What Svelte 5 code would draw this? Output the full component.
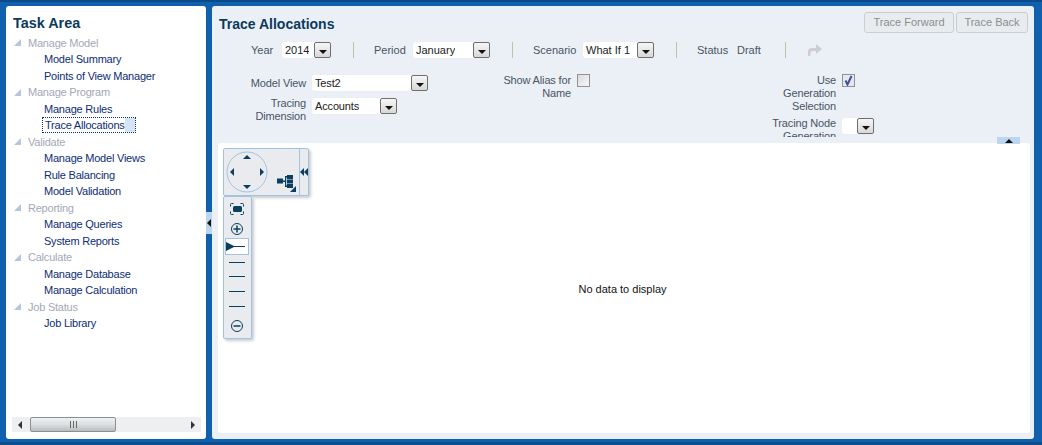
<script>
  const tasks = [
    { name: "Manage Model", items: ["Model Summary", "Points of View Manager"] },
    { name: "Manage Program", items: ["Manage Rules", "Trace Allocations"] },
    { name: "Validate", items: ["Manage Model Views", "Rule Balancing", "Model Validation"] },
    { name: "Reporting", items: ["Manage Queries", "System Reports"] },
    { name: "Calculate", items: ["Manage Database", "Manage Calculation"] },
    { name: "Job Status", items: ["Job Library"] },
  ];
  const ticks = [262, 276, 291, 306];
</script>

{#snippet combo(text, width)}
  <span class="combo" style="width:{width}px">
    <span class="combo-text">{text}</span>
    <span class="combo-btn"><i></i></span>
  </span>
{/snippet}

<div class="page">
  <aside class="left">
    <h2>Task Area</h2>
    <ul class="tree">
      {#each tasks as t}
        <li class="group"><span class="tri"></span>{t.name}</li>
        {#each t.items as item}
          <li class="item"><span class:current={item === "Trace Allocations"}>{item}</span></li>
        {/each}
      {/each}
    </ul>
    <div class="hscroll">
      <span class="arr l"></span>
      <span class="thumb"><b></b></span>
      <span class="arr r"></span>
    </div>
  </aside>

  <span class="split"><i></i></span>

  <main class="right">
    <header class="head">
      <h1>Trace Allocations</h1>
      <div class="btns">
        <button class="b1">Trace Forward</button>
        <button class="b2">Trace Back</button>
      </div>
    </header>

    <div class="bar">
      <label class="l-year">Year</label>
      {@render combo("2014", 49)}
      <span class="sep"></span>
      <label class="l-period">Period</label>
      {@render combo("January", 77)}
      <span class="sep"></span>
      <label class="l-scenario">Scenario</label>
      {@render combo("What If 1", 71)}
      <span class="sep"></span>
      <label class="l-status">Status</label>
      <span class="draft">Draft</span>
      <span class="sep"></span>
      <svg class="redo" width="16" height="14" viewBox="0 0 16 14">
        <path d="M1 13V8.500C1 6.500 2.500 5 4.500 5H9V1l6 5-6 5V8H5.500C4 8 3.500 9 3.500 11L3 13Z" fill="#cfcdcf" />
      </svg>
    </div>

    <div class="form">
      <div class="col c1">
        <div class="field"><label>Model View</label>{@render combo("Test2", 116)}</div>
        <div class="field dim"><label>Tracing Dimension</label>{@render combo("Accounts", 85)}</div>
      </div>
      <div class="col c2">
        <div class="field"><label>Show Alias for Name</label><span class="check off"></span></div>
      </div>
      <div class="col c3">
        <div class="field">
          <label>Use Generation Selection</label>
          <span class="check">
            <svg width="11" height="11" viewBox="0 0 11 11"><path d="M2.500 5.500 4.500 9.500 8.500 1" fill="none" stroke="#3f4f9c" stroke-width="2" /></svg>
          </span>
        </div>
        <div class="field node"><label>Tracing Node Generation</label>{@render combo("", 32)}</div>
      </div>
    </div>

    <span class="collapse"><i></i></span>

    <section class="canvas">
      <p>No data to display</p>

      <div class="pan">
        <svg class="pan-art" width="86" height="48" viewBox="0 0 86 48">
          <circle cx="24" cy="24" r="20" fill="#e9ebef" stroke="#a3c2e0" stroke-width="1" />
          <g fill="#0b3f5f">
            <path d="M24 7l-4 4h8Z" /><path d="M24 41l-4-4h8Z" />
            <path d="M7 24l4-4v8Z" /><path d="M41 24l-4-4v8Z" />
            <rect x="54" y="30.500" width="6" height="5" />
            <path d="M60 32.500h2V28h2v1.500h-.800v8h.800V39h-2v-5h-2Z" />
            <rect x="64" y="27" width="6" height="4" /><rect x="64" y="31.500" width="6" height="4" /><rect x="64" y="36" width="6" height="4" />
            <path d="M73 44h-6l6-6Z" />
            <path d="M77 24l4-4v8Z" /><path d="M81 24l4-4v8Z" />
          </g>
          <line x1="76.500" y1="0" x2="76.500" y2="48" stroke="#a3c2e0" />
        </svg>
      </div>

      <div class="zoom">
        <svg width="29" height="143" viewBox="223 196 29 143">
          <path d="M230.500 206.500v-2a1 1 0 0 1 1-1h2M240.500 203.500h2a1 1 0 0 1 1 1v2M243.500 211.500v2a1 1 0 0 1-1 1h-2M233.500 214.500h-2a1 1 0 0 1-1-1v-2" fill="none" stroke="#0b3f5f" />
          <rect x="233" y="206" width="9" height="6" rx="1.500" fill="#0b3f5f" />
          <circle cx="237" cy="229" r="5.500" fill="#e9ebef" stroke="#0b3f5f" />
          <path d="M233.500 229h7M237 225.500v7" stroke="#0b3f5f" stroke-width="1.500" />
          <rect x="225.500" y="238.500" width="23" height="16" fill="#fff" stroke="#a3c2e0" />
          <path d="M226 242l9 4.500-9 4.500Z" fill="#0b3f5f" />
          <line x1="232" y1="246.500" x2="245" y2="246.500" stroke="#0b3f5f" />
          {#each ticks as y}
            <line x1="229" y1={y + 0.5} x2="245" y2={y + 0.5} stroke="#0b3f5f" />
          {/each}
          <circle cx="237" cy="326" r="5.500" fill="#e9ebef" stroke="#0b3f5f" />
          <path d="M233.500 326h7" stroke="#0b3f5f" stroke-width="1.500" />
        </svg>
      </div>
    </section>
  </main>
</div>

<style>
  :global(body) {
    margin: 0;
    background: #1160ae;
  }
  .page {
    box-sizing: border-box;
    width: 1042px;
    height: 445px;
    display: flex;
    padding: 4px 8px 3px 6px;
    background: #1160ae;
    border-top: 2px solid #0b4a88;
    border-bottom: 3px solid #0c4f90;
    font: 11px/13px "Liberation Sans", Arial, sans-serif;
    color: #4a5463;
    overflow: hidden;
  }
  .left {
    box-sizing: border-box;
    width: 200px;
    height: 433px;
    background: #fff;
    border-radius: 3px;
    position: relative;
    padding: 8px 0 0 7px;
  }
  h2 {
    margin: 0 0 2.500px;
    font-size: 14.400px;
    line-height: 18px;
    font-weight: 700;
    color: #0b3a5c;
  }
  .tree {
    list-style: none;
    margin: 0;
    padding: 0;
    letter-spacing: -0.220px;
  }
  .tree li {
    height: 16.500px;
    line-height: 16.500px;
    white-space: nowrap;
  }
  .group {
    color: #a3a8b8;
    display: flex;
    align-items: center;
  }
  .tri {
    width: 0;
    height: 0;
    margin: 0 7px 0 1px;
    border-left: 7px solid transparent;
    border-bottom: 7px solid #b5c6da;
  }
  .item {
    padding-left: 31px;
    color: #0c2d78;
  }
  .current {
    display: inline-block;
    line-height: 14px;
    padding: 0 10px 0 2px;
    margin-left: -1px;
    outline: 1px dotted #0c2d78;
    background: linear-gradient(to right, transparent 89%, #d5e4f3 89%);
  }
  .hscroll {
    position: absolute;
    left: 6px;
    right: 5px;
    bottom: 7px;
    height: 15px;
    display: flex;
    align-items: center;
    background: #eeeff1;
  }
  .arr {
    width: 0;
    height: 0;
    border-top: 4px solid transparent;
    border-bottom: 4px solid transparent;
  }
  .arr.l {
    margin-left: 6px;
    border-right: 4px solid #333;
  }
  .arr.r {
    margin-left: auto;
    margin-right: 6px;
    border-left: 4px solid #333;
  }
  .thumb {
    box-sizing: border-box;
    width: 86px;
    height: 15px;
    margin-left: 8px;
    display: flex;
    align-items: center;
    justify-content: center;
    border: 1px solid #8c8f92;
    border-radius: 2px;
    background: linear-gradient(#eef0f1, #dcdfe0 50%, #b9bdbf);
  }
  .thumb b {
    width: 7px;
    height: 7px;
    background: repeating-linear-gradient(to right, #666 0 1px, transparent 1px 3px);
  }
  .split {
    width: 6px;
    height: 22px;
    margin-top: 206px;
    background: #bcd6f0;
    display: flex;
    align-items: center;
    flex: none;
  }
  .split i {
    width: 0;
    height: 0;
    margin-left: 1px;
    border-top: 4px solid transparent;
    border-bottom: 4px solid transparent;
    border-right: 4px solid #111;
  }
  .right {
    box-sizing: border-box;
    width: 822px;
    height: 433px;
    position: relative;
    display: flex;
    flex-direction: column;
    background: #ebf0f7;
    border-radius: 3px;
    padding: 6px;
  }
  .head {
    display: flex;
    justify-content: space-between;
    height: 24px;
  }
  h1 {
    margin: 3px 0 0 1px;
    font-size: 14px;
    line-height: 18px;
    font-weight: 700;
    color: #0b3a5c;
  }
  .btns {
    display: flex;
    gap: 2px;
    height: 21px;
  }
  button {
    box-sizing: border-box;
    height: 21px;
    padding: 0;
    font: inherit;
    color: #8a8e93;
    background: #e9ecee;
    border: 1px solid #c9ced2;
    border-radius: 3px;
  }
  .b1 {
    width: 90px;
  }
  .b2 {
    width: 72px;
  }
  .bar {
    display: flex;
    align-items: center;
    height: 16px;
    margin-top: 6px;
    padding-left: 33px;
  }
  .bar label {
    flex: none;
  }
  .l-year {
    width: 31px;
  }
  .l-period {
    width: 39px;
  }
  .l-scenario {
    width: 50px;
  }
  .l-status {
    width: 40px;
  }
  .sep {
    width: 1px;
    height: 16px;
    margin: 0 20px 0 22px;
    background: #c2c0a5;
  }
  .draft {
    width: 26px;
    margin-right: -22px;
    padding-right: 22px;
    flex: none;
  }
  .redo {
    margin-left: 1px;
  }
  .combo {
    box-sizing: border-box;
    height: 16px;
    display: inline-flex;
    align-items: center;
    justify-content: space-between;
    background: #fff;
    border-radius: 2px;
    box-shadow: 0 0 1px #cfd5dd;
    flex: none;
  }
  .combo-text {
    padding-left: 3px;
    color: #222;
    white-space: nowrap;
    overflow: hidden;
  }
  .combo-btn {
    box-sizing: border-box;
    width: 17px;
    height: 16px;
    flex: none;
    display: flex;
    align-items: center;
    justify-content: center;
    background: linear-gradient(#f6f6f6, #d8d8d8);
    border: 1px solid #6f6f6f;
    border-radius: 2px;
  }
  .combo-btn i {
    width: 0;
    height: 0;
    margin-top: 4px;
    border-left: 4px solid transparent;
    border-right: 4px solid transparent;
    border-top: 4px solid #111;
  }
  .form {
    display: grid;
    grid-template-columns: 265px 266px 1fr;
    height: 63px;
    margin: 16px 0 6px;
    overflow: hidden;
    letter-spacing: -0.150px;
  }
  .field {
    display: flex;
    gap: 6px;
    align-items: flex-start;
  }
  .field label {
    flex: none;
    text-align: right;
  }
  .c1 {
    padding-top: 1px;
  }
  .c1 .field {
    align-items: center;
    margin-bottom: 7px;
  }
  .c1 label {
    width: 88px;
  }
  .c1 .dim {
    align-items: flex-start;
  }
  .c1 .dim label {
    margin-top: -1px;
  }
  .c2 .field {
    justify-content: flex-end;
    padding-right: 159px;
  }
  .c2 label {
    width: 84px;
  }
  .c3 label {
    width: 66px;
    margin-left: 21px;
  }
  .c3 .node {
    margin-top: 4px;
  }
  .node .combo {
    margin-top: 1px;
  }
  .check {
    box-sizing: border-box;
    width: 13px;
    height: 13px;
    flex: none;
    display: flex;
    align-items: center;
    justify-content: center;
    background: #e4e8ee;
    border: 1px solid #8f9397;
  }
  .check.off {
    background: linear-gradient(135deg, #d8dbe0, #f6f7f9);
  }
  .collapse {
    position: absolute;
    right: 14px;
    top: 131px;
    z-index: 1;
    width: 23px;
    height: 7px;
    background: #bcd6f0;
    display: flex;
    align-items: center;
    justify-content: center;
  }
  .collapse i {
    width: 0;
    height: 0;
    border-left: 4px solid transparent;
    border-right: 4px solid transparent;
    border-bottom: 4px solid #111;
  }
  .canvas {
    flex: 1;
    position: relative;
    margin-right: -2px;
    display: flex;
    align-items: center;
    justify-content: center;
    background: #fff;
    border-radius: 3px;
    color: #111;
  }
  .canvas p {
    margin: 3px 3px 0 0;
  }
  .pan {
    position: absolute;
    left: 5px;
    top: 5px;
    width: 86px;
    height: 48px;
    background: #e9ebef;
    box-shadow: 2px 2px 3px #c8ccd2;
    border: 1px solid #a3c2e0;
    box-sizing: border-box;
    border-radius: 2px;
    overflow: hidden;
  }
  .pan-art {
    display: block;
    margin: -1px;
  }
  .zoom {
    position: absolute;
    left: 5px;
    top: 53px;
    width: 29px;
    height: 143px;
    background: #e9ebef;
    box-shadow: 2px 2px 3px #c8ccd2;
    outline: 1px solid #a3c2e0;
    outline-offset: -1px;
    border-radius: 2px;
  }
  .zoom svg {
    display: block;
  }
</style>
